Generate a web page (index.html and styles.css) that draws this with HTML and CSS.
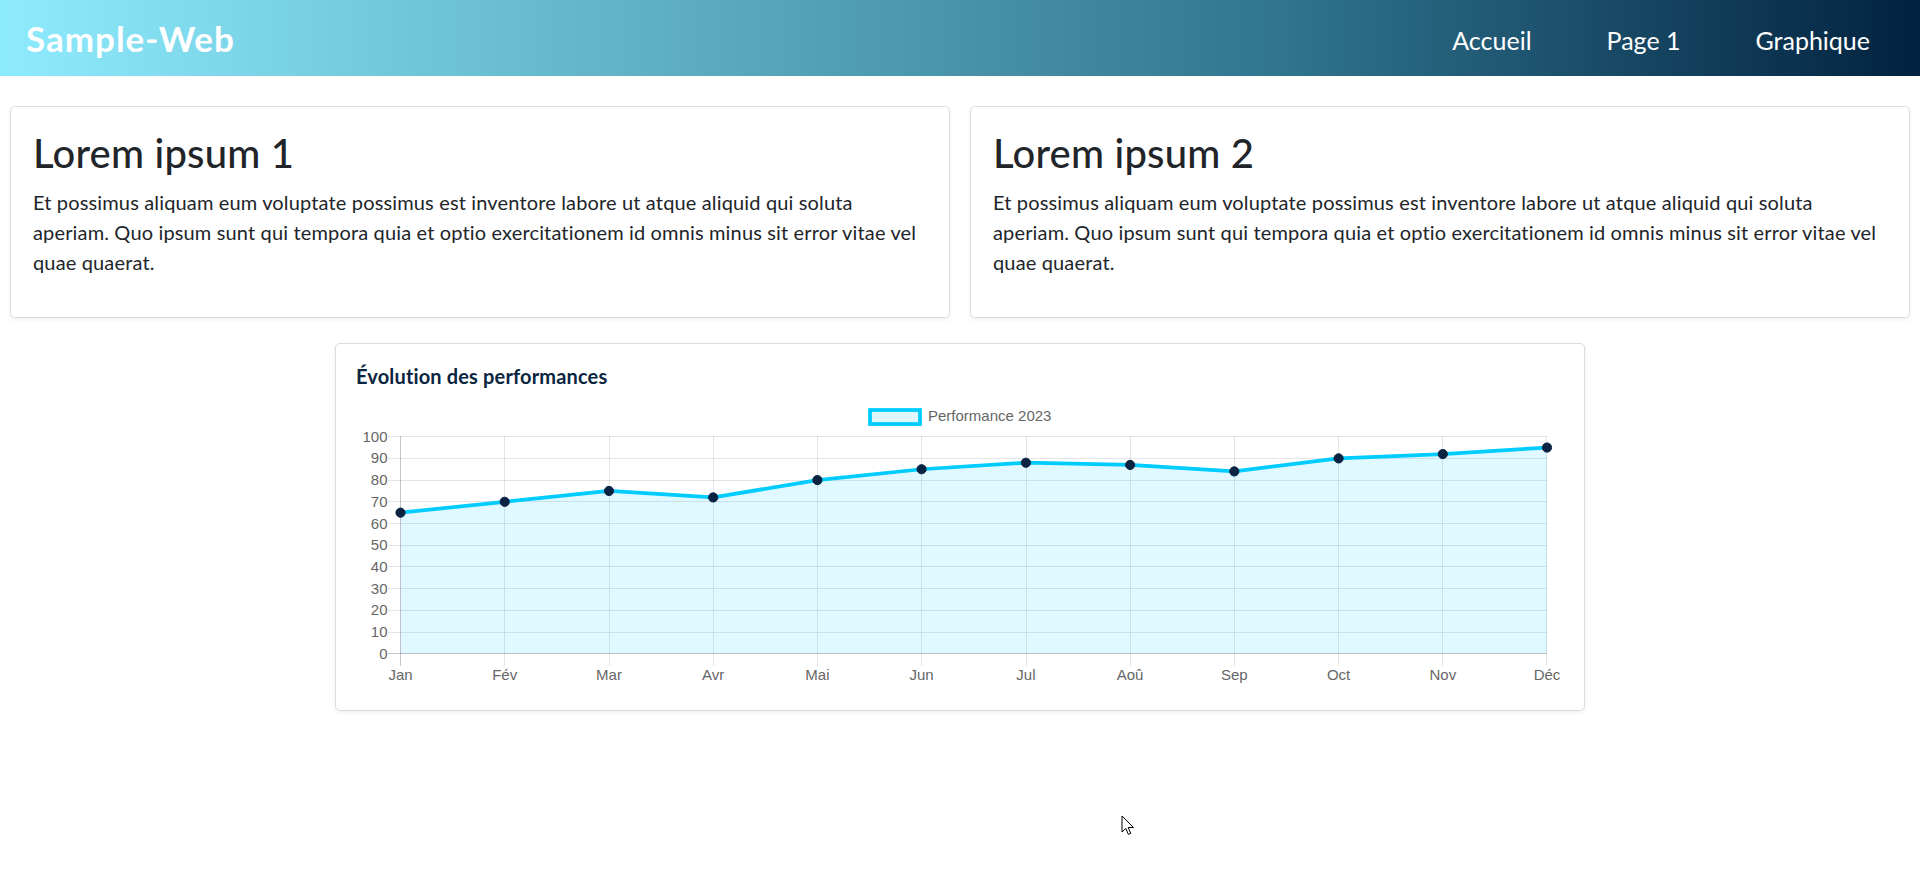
FILE: index.html
```html
<!DOCTYPE html>
<html lang="fr">
<head>
<meta charset="utf-8">
<title>Sample-Web</title>
<link rel="stylesheet" href="styles.css">
</head>
<body>
<header class="topbar">
  <a class="brand" href="#">Sample-Web</a>
  <nav class="nav">
    <a href="#">Accueil</a>
    <a href="#">Page 1</a>
    <a href="#">Graphique</a>
  </nav>
</header>
<main class="main">
  <section class="cards">
    <article class="card">
      <h1 class="card-title">Lorem ipsum 1</h1>
      <p class="card-text">Et possimus aliquam eum voluptate possimus est inventore labore ut atque aliquid qui soluta<br>aperiam. Quo ipsum sunt qui tempora quia et optio exercitationem id omnis minus sit error vitae vel<br>quae quaerat.</p>
    </article>
    <article class="card">
      <h1 class="card-title">Lorem ipsum 2</h1>
      <p class="card-text">Et possimus aliquam eum voluptate possimus est inventore labore ut atque aliquid qui soluta<br>aperiam. Quo ipsum sunt qui tempora quia et optio exercitationem id omnis minus sit error vitae vel<br>quae quaerat.</p>
    </article>
  </section>
  <section class="chart-card">
    <h5 class="chart-title">Évolution des performances</h5>
    <svg class="chart" width="1208" height="290" viewBox="0 0 1208 290">
      <!-- legend -->
      <rect class="legend-box" x="514" y="10" width="50" height="14"/>
      <text class="legend-text" x="572" y="21">Performance 2023</text>
      <!-- horizontal grid -->
      <g class="grid">
        <line x1="32" y1="36.5" x2="1191" y2="36.5"/>
        <line x1="32" y1="58.5" x2="1191" y2="58.5"/>
        <line x1="32" y1="80.5" x2="1191" y2="80.5"/>
        <line x1="32" y1="101.5" x2="1191" y2="101.5"/>
        <line x1="32" y1="123.5" x2="1191" y2="123.5"/>
        <line x1="32" y1="145.5" x2="1191" y2="145.5"/>
        <line x1="32" y1="166.5" x2="1191" y2="166.5"/>
        <line x1="32" y1="188.5" x2="1191" y2="188.5"/>
        <line x1="32" y1="210.5" x2="1191" y2="210.5"/>
        <line x1="32" y1="232.5" x2="1191" y2="232.5"/>
      </g>
      <!-- vertical grid -->
      <g class="grid">
        <line x1="148.5" y1="36" x2="148.5" y2="266"/>
        <line x1="253.5" y1="36" x2="253.5" y2="266"/>
        <line x1="357.5" y1="36" x2="357.5" y2="266"/>
        <line x1="461.5" y1="36" x2="461.5" y2="266"/>
        <line x1="565.5" y1="36" x2="565.5" y2="266"/>
        <line x1="670.5" y1="36" x2="670.5" y2="266"/>
        <line x1="774.5" y1="36" x2="774.5" y2="266"/>
        <line x1="878.5" y1="36" x2="878.5" y2="266"/>
        <line x1="982.5" y1="36" x2="982.5" y2="266"/>
        <line x1="1086.5" y1="36" x2="1086.5" y2="266"/>
        <line x1="1190.5" y1="36" x2="1190.5" y2="266"/>
      </g>
      <!-- area -->
      <polygon class="area" points="44.5,112.65 148.7,101.8 253,90.95 357.2,97.46 461.4,80.1 565.6,69.25 669.9,62.74 774.1,64.91 878.3,71.42 982.6,58.4 1086.8,54.06 1191,47.55 1191,253.7 44.5,253.7"/>
      <!-- zero lines -->
      <g class="zero">
        <line x1="32" y1="253.5" x2="1191" y2="253.5"/>
        <line x1="44.5" y1="36" x2="44.5" y2="266"/>
      </g>
      <!-- line -->
      <polyline class="line" points="44.5,112.65 148.7,101.8 253,90.95 357.2,97.46 461.4,80.1 565.6,69.25 669.9,62.74 774.1,64.91 878.3,71.42 982.6,58.4 1086.8,54.06 1191,47.55"/>
      <g class="points">
        <circle cx="44.5" cy="112.65" r="4.6"/>
        <circle cx="148.7" cy="101.8" r="4.6"/>
        <circle cx="253" cy="90.95" r="4.6"/>
        <circle cx="357.2" cy="97.46" r="4.6"/>
        <circle cx="461.4" cy="80.1" r="4.6"/>
        <circle cx="565.6" cy="69.25" r="4.6"/>
        <circle cx="669.9" cy="62.74" r="4.6"/>
        <circle cx="774.1" cy="64.91" r="4.6"/>
        <circle cx="878.3" cy="71.42" r="4.6"/>
        <circle cx="982.6" cy="58.4" r="4.6"/>
        <circle cx="1086.8" cy="54.06" r="4.6"/>
        <circle cx="1191" cy="47.55" r="4.6"/>
      </g>
      <!-- y labels -->
      <g class="ylabels">
        <text x="31.5" y="41.7">100</text>
        <text x="31.5" y="63.4">90</text>
        <text x="31.5" y="85.1">80</text>
        <text x="31.5" y="106.8">70</text>
        <text x="31.5" y="128.5">60</text>
        <text x="31.5" y="150.2">50</text>
        <text x="31.5" y="171.9">40</text>
        <text x="31.5" y="193.6">30</text>
        <text x="31.5" y="215.3">20</text>
        <text x="31.5" y="237">10</text>
        <text x="31.5" y="258.7">0</text>
      </g>
      <!-- x labels -->
      <g class="xlabels">
        <text x="44.5" y="280">Jan</text>
        <text x="148.7" y="280">Fév</text>
        <text x="253" y="280">Mar</text>
        <text x="357.2" y="280">Avr</text>
        <text x="461.4" y="280">Mai</text>
        <text x="565.6" y="280">Jun</text>
        <text x="669.9" y="280">Jul</text>
        <text x="774.1" y="280">Aoû</text>
        <text x="878.3" y="280">Sep</text>
        <text x="982.6" y="280">Oct</text>
        <text x="1086.8" y="280">Nov</text>
        <text x="1191" y="280">Déc</text>
      </g>
    </svg>
  </section>
</main>
<svg class="cursor" width="14" height="21" viewBox="0 0 14 21">
  <path d="M1 1 L1 17 L4.8 13.4 L7.4 19.4 L9.8 18.4 L7.2 12.5 L12.4 12.5 Z" fill="#fff" stroke="#000" stroke-width="1" stroke-linejoin="round"/>
</svg>
</body>
</html>
```

FILE: styles.css
```css
* {
  box-sizing: border-box;
}

html,
body {
  margin: 0;
  padding: 0;
}

body {
  position: relative;
  min-height: 869px;
  font-family: Lato, "Open Sans", "Liberation Sans", sans-serif;
  color: #212529;
  background: #fff;
}

.topbar {
  height: 76px;
  display: flex;
  align-items: center;
  justify-content: space-between;
  padding: 0 50px 0 26px;
  background: linear-gradient(to right, #8eebfd 0%, #60b2c6 33%, #30748e 67%, #02223f 100%);
}

.brand {
  color: #fff;
  font-weight: 700;
  font-size: 35px;
  line-height: 42px;
  letter-spacing: 1px;
  text-decoration: none;
}

.nav {
  display: flex;
  gap: 75px;
  padding-top: 4px;
}

.nav a {
  color: #fff;
  font-size: 25px;
  line-height: 30px;
  text-decoration: none;
}

.main {
  padding: 30px 10px 0;
}

.cards {
  display: grid;
  grid-template-columns: 1fr 1fr;
  gap: 20px;
}

.card {
  border: 1px solid #dcdcdc;
  border-radius: 5px;
  padding: 22px 22px 20px;
  box-shadow: 0 2px 4px rgba(0, 0, 0, 0.06);
}

.card-title {
  font-size: 40px;
  font-weight: 500;
  line-height: 48px;
  letter-spacing: 0.2px;
  margin: 0 0 10px;
}

.card-text {
  font-size: 20px;
  line-height: 30px;
  letter-spacing: 0.15px;
  margin: 0 0 20px;
}

.chart-card {
  width: 1250px;
  margin: 25px auto 0;
  border: 1px solid #dcdcdc;
  border-radius: 5px;
  padding: 20px;
  box-shadow: 0 2px 4px rgba(0, 0, 0, 0.06);
}

.chart-title {
  font-size: 20px;
  font-weight: 700;
  line-height: 24px;
  letter-spacing: 0.15px;
  margin: 0 0 12px;
  color: #0a2540;
}

.chart {
  display: block;
}

.chart text {
  font-family: "Liberation Sans", Arial, sans-serif;
  font-size: 15px;
  fill: #666;
}

.legend-box {
  fill: #e0f7fe;
  stroke: #00ccff;
  stroke-width: 3.75;
}

.grid line {
  stroke: rgba(0, 0, 0, 0.1);
  stroke-width: 1;
}

.zero line {
  stroke: rgba(0, 0, 0, 0.22);
  stroke-width: 1;
}

.area {
  fill: rgba(0, 200, 255, 0.12);
}

.line {
  fill: none;
  stroke: #00ccff;
  stroke-width: 3.75;
  stroke-linejoin: round;
}

.points circle {
  fill: #0a2342;
  stroke: #0a2342;
  stroke-width: 1;
}

.ylabels text {
  text-anchor: end;
}

.xlabels text {
  text-anchor: middle;
}

.cursor {
  position: absolute;
  left: 1121px;
  top: 815px;
}
```
